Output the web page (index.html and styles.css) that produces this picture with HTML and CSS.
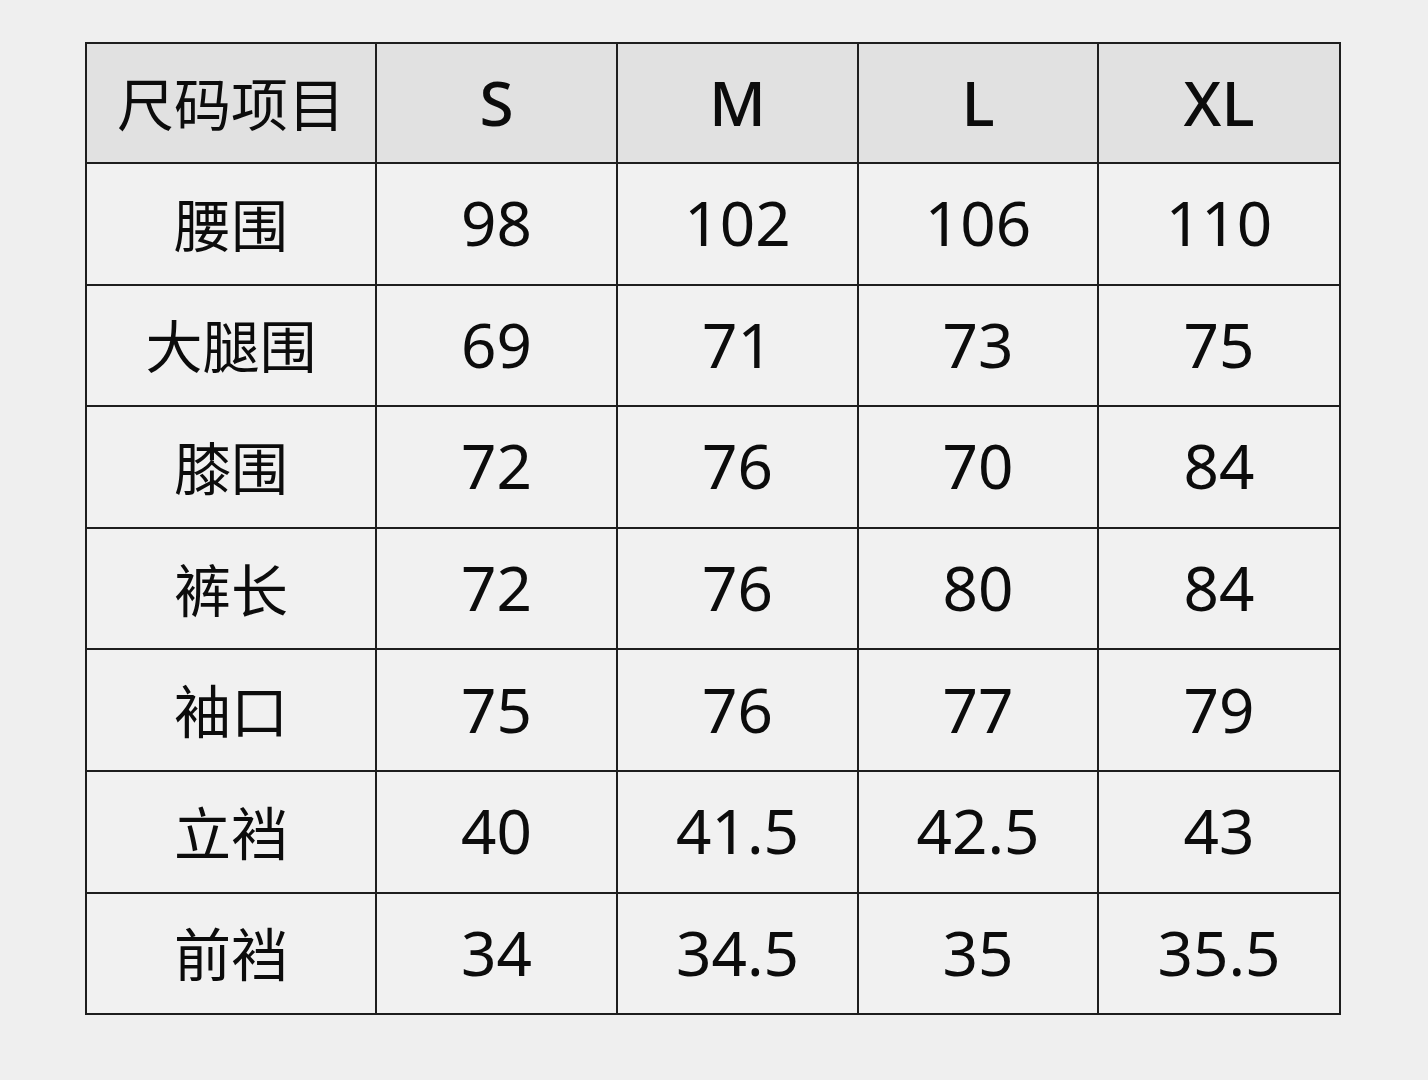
FILE: index.html
```html
<!DOCTYPE html>
<html lang="zh">
<head>
<meta charset="utf-8">
<title>尺码表</title>
<link rel="stylesheet" href="styles.css">
</head>
<body>
<div class="page">
<table class="size-table">
<colgroup>
<col class="c-label"><col class="c-size"><col class="c-size"><col class="c-size-l"><col class="c-size-xl">
</colgroup>
<thead>
<tr><th class="label">尺码项目</th><th>S</th><th>M</th><th>L</th><th>XL</th></tr>
</thead>
<tbody>
<tr><td class="label">腰围</td><td>98</td><td>102</td><td>106</td><td>110</td></tr>
<tr><td class="label">大腿围</td><td>69</td><td>71</td><td>73</td><td>75</td></tr>
<tr><td class="label">膝围</td><td>72</td><td>76</td><td>70</td><td>84</td></tr>
<tr><td class="label">裤长</td><td>72</td><td>76</td><td>80</td><td>84</td></tr>
<tr><td class="label">袖口</td><td>75</td><td>76</td><td>77</td><td>79</td></tr>
<tr><td class="label">立裆</td><td>40</td><td>41.5</td><td>42.5</td><td>43</td></tr>
<tr><td class="label">前裆</td><td>34</td><td>34.5</td><td>35</td><td>35.5</td></tr>
</tbody>
</table>
</div>
</body>
</html>
```

FILE: styles.css
```css
html, body {
  margin: 0;
  padding: 0;
  background: #efefef;
}
.page {
  width: 1428px;
  height: 1080px;
  box-sizing: border-box;
  padding: 42px 0 0 85px;
}
.size-table {
  border-collapse: collapse;
  table-layout: fixed;
  width: 1254px;
  font-family: "Noto Sans", "Noto Sans CJK SC", sans-serif;
  color: #0c0c0c;
}
.c-label { width: 290px; }
.c-size { width: 241px; }
.c-size-l { width: 240px; }
.c-size-xl { width: 242px; }
.size-table th,
.size-table td {
  border: 2px solid #1e1e1e;
  padding: 0 0 3px;
  text-align: center;
  vertical-align: middle;
  font-weight: 400;
  font-size: 62px;
  line-height: 1;
}
.size-table thead th {
  background: #e1e1e1;
  height: 115px;
  font-weight: 500;
}
.size-table tbody td {
  background: #f1f1f1;
  height: 116.6px;
}
.size-table .label {
  font-family: "Noto Sans CJK SC", sans-serif;
  font-size: 57px;
  font-weight: 400;
}
```
